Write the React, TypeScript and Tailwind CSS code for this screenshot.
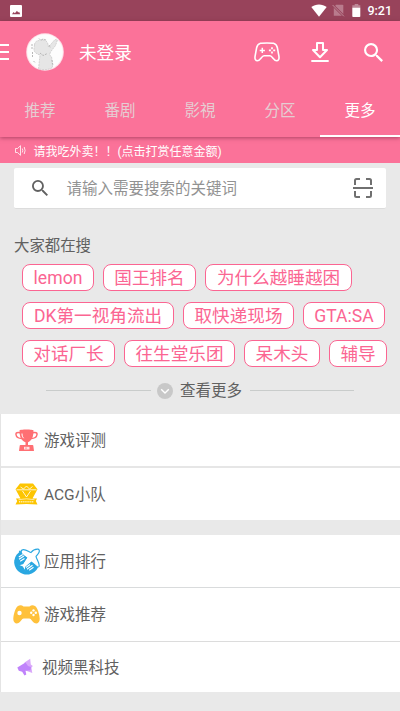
import React from 'react';

const fontStack = "font-['Roboto','Noto_Sans_CJK_SC',sans-serif]";

const tabs = ['推荐', '番剧', '影視', '分区', '更多'];

const tagRows = [
  [
    { label: 'lemon', width: 'w-[72px]' },
    { label: '国王排名', width: 'w-[93px]' },
    { label: '为什么越睡越困', width: 'w-[147px]' },
  ],
  [
    { label: 'DK第一视角流出', width: 'w-[152px]' },
    { label: '取快递现场', width: 'w-[111px]' },
    { label: 'GTA:SA', width: 'w-[82px]' },
  ],
  [
    { label: '对话厂长', width: 'w-[93px]' },
    { label: '往生堂乐团', width: 'w-[111px]' },
    { label: '呆木头', width: 'w-[76px]' },
    { label: '辅导', width: 'w-[58px]' },
  ],
];

function StatusBar() {
  return (
    <div className="flex h-[21px] items-center bg-[#98435b] pl-[10px] pr-[8px] text-white">
      <svg className="h-3 w-3" viewBox="0 0 12 12">
        <rect width="12" height="12" rx="1" fill="#fff" />
        <path d="M2 9.2 3.6 7l1.3 1.3L7 5.8l1.2 1.8.9-.8L10.2 9.2Z" fill="#98435b" />
      </svg>
      <svg className="ml-auto h-[13px] w-4" viewBox="0 0 16 13">
        <path d="M8 12.8.3 3.1C4.700-.4 11.300-.4 15.700 3.100Z" fill="#fff" />
      </svg>
      <svg className="ml-[5px] h-[13px] w-[13px]" viewBox="0 0 13 13">
        <path d="M4 .8h6.500q.8 0 .8.8v10.200H1.800V3.500Z" fill="#b97b8d" />
        <path d="M.8 1.200 12 12.400" stroke="#98435b" strokeWidth="2.400" />
        <path d="M.6 1 11.900 12.300" stroke="#c08a99" strokeWidth="1" />
      </svg>
      <svg className="ml-[7px] h-[13px] w-[9px]" viewBox="0 0 9 13">
        <path d="M2.700 0h3.600v1.300h2V4H.3V1.300h2.400Z" fill="#bd8797" />
        <path d="M.3 3.800h8V12.200q0 .8-.8.8H1.100q-.8 0-.8-.8Z" fill="#fff" />
      </svg>
      <span className="ml-[6px] pt-px text-[12.500px] font-medium leading-none">9:21</span>
    </div>
  );
}

function Avatar() {
  return (
    <svg className="ml-[17px] h-[38px] w-[38px]" viewBox="0 0 38 38">
      <circle cx="19" cy="19" r="18.800" fill="#ffdfe8" />
      <circle cx="19" cy="19" r="17.800" fill="#fdfdfd" />
      <path
        d="M8.500 12C8.500 9 11 7 14.500 7.500c4-1.500 7 .5 7.500 4l.5 2.500L29 6.500l2.500.5-2 5.500-5 6.500-1 3c1.200.5 2 1.500 2.300 3l.7 9.500c-4 2.500-9 2.800-14 1.300L14 22c-4-1-6.500-3.500-6-6.500Z"
        fill="#e6e6e6"
        stroke="#bdbdbd"
        strokeWidth=".6"
        strokeDasharray="2 .8"
      />
      <path
        d="M13 5.500l1.500 1.500L17.500 6l3.500 1.500M14 20l3 2.500 4.500-2M23 12l1.500 3M6 11v5M6.500 19v5M7.500 28l2 2M26 27l1 6"
        fill="none"
        stroke="#b0b0b0"
        strokeWidth=".9"
        strokeDasharray="2 1"
      />
    </svg>
  );
}

function SearchIcon({ className }: { className: string }) {
  return (
    <svg className={className} viewBox="3 3 17.500 17.500">
      <path
        d="M15.500 14h-.79l-.28-.27A6.471 6.471 0 0 0 16 9.500 6.500 6.500 0 1 0 9.500 16c1.610 0 3.090-.59 4.230-1.570l.27.28v.79l5 4.990L20.490 19l-4.990-5zm-6 0C7.010 14 5 11.990 5 9.500S7.010 5 9.500 5 14 7.010 14 9.500 11.990 14 9.500 14z"
        fill="currentColor"
      />
    </svg>
  );
}

function AppBar() {
  return (
    <header className="relative z-10 flex h-[116px] flex-col bg-[#fb7299] shadow-[0_1px_4px_rgba(100,20,50,0.5)]">
      <div className="flex h-[62px] items-center text-white">
        <svg className="h-4 w-[9px]" viewBox="0 0 9 16">
          <path d="M0 1h9M0 8h9M0 15h9" stroke="#fff" strokeWidth="2" />
        </svg>
        <Avatar />
        <span className="ml-[15px] pt-[4px] text-[17.600px] leading-none">未登录</span>
        <svg className="ml-auto h-[20px] w-[26px]" viewBox="0 0 26 20" fill="none" stroke="#fff">
          <path
            d="M6.500 1.300C8.200.8 17.800.8 19.500 1.300c2.200.6 3.300 2 3.900 4.500l1.500 8.400c.5 3.200-.6 4.600-2.300 4.600-2.800 0-4.200-5-6.600-5h-6c-2.400 0-3.800 5-6.600 5-1.700 0-2.800-1.400-2.300-4.600l1.500-8.400c.6-2.500 1.700-3.900 3.900-4.500Z"
            strokeWidth="1.600"
          />
          <path d="M8.300 5.800v5.200M5.700 8.400h5.200" strokeWidth="1.500" />
          <path d="M18 5.300v2M18 9.600v2M14.900 8.400h2M19.200 8.400h2" strokeWidth="1.700" />
        </svg>
        <svg className="ml-[31px] h-[20px] w-[18px]" viewBox="0 0 18 20" fill="none" stroke="#fff">
          <path
            d="M6 1h6v7h4L9 15.200 2 8h4Z"
            strokeWidth="2"
            strokeLinejoin="round"
          />
          <path d="M.3 19h17.400" strokeWidth="2" />
        </svg>
        <SearchIcon className="ml-[35px] mr-[17px] h-[19px] w-[19px]" />
      </div>
      <nav className="grid flex-1 grid-cols-5">
        {tabs.map((tab, index) => (
          <div
            key={tab}
            className={
              index === 4
                ? 'flex items-center justify-center border-b-2 border-white pt-[5px] text-[15.500px] text-white'
                : 'flex items-center justify-center border-b-2 border-transparent pt-[5px] text-[15.500px] text-[#e5cdd2]'
            }
          >
            {tab}
          </div>
        ))}
      </nav>
    </header>
  );
}

function SearchPanel() {
  return (
    <>
      <div className="mx-[14px] mt-[5px] flex h-[41px] items-center rounded-[2px] border-b border-[#dcdcdc] bg-white">
        <SearchIcon className="ml-[18px] h-4 w-4 text-[#616161]" />
        <span className="ml-[18.500px] pt-[3px] text-[15.500px] text-[#929292]">请输入需要搜索的关键词</span>
        <svg
          className="ml-auto mr-[13px] h-[20px] w-5"
          viewBox="0 0 20 20"
          fill="none"
          stroke="#707070"
          strokeWidth="2"
        >
          <path d="M2 7V2.500Q2 1 3.500 1H7M13 1h3.500Q18 1 18 2.500V7M2 13v4.500Q2 19 3.500 19H7M13 19h3.500q1.500 0 1.500-1.500V13M0 10h20" />
        </svg>
      </div>
      <h2 className="ml-[14px] mt-[26px] text-[15.400px] leading-[22px] text-[#616161]">大家都在搜</h2>
      <div className="ml-[22px] mt-[7px] flex flex-col gap-[11px]">
        {tagRows.map((row, index) => (
          <div key={index} className="flex gap-[9px]">
            {row.map((tag) => (
              <div
                key={tag.label}
                className={`${tag.width} flex h-[27px] shrink-0 items-center justify-center whitespace-nowrap rounded-[8px] border border-[#fb6592] bg-white pt-[3px] text-[17.600px] leading-none text-[#fb6592]`}
              >
                {tag.label}
              </div>
            ))}
          </div>
        ))}
      </div>
      <div className="mx-[46px] mt-[12px] flex h-[23px] items-center">
        <div className="h-px w-[105px] bg-[#c9cccb]" />
        <svg className="ml-[6px] h-4 w-4" viewBox="0 0 16 16">
          <circle cx="8" cy="8" r="8" fill="#c8c8c8" />
          <path d="m4.200 6.300 3.800 3.700 3.800-3.700" fill="none" stroke="#fff" strokeWidth="1.400" />
        </svg>
        <span className="ml-[7px] pt-[3px] text-[15.500px] leading-none text-[#616161]">查看更多</span>
        <div className="ml-auto h-px w-[104px] bg-[#c9cccb]" />
      </div>
    </>
  );
}

function TrophyIcon() {
  return (
    <svg className="h-[22px] w-[23px]" viewBox="0 0 23 22">
      <path
        d="M5.500 3.800C2 3 .7 4 1 5.500c.3 2.500 2.500 4 6 4M17.500 3.800c3.500-.8 4.800.2 4.500 1.700-.3 2.500-2.500 4-6 4"
        fill="none"
        stroke="#ff6f73"
        strokeWidth="1.500"
      />
      <path
        d="M4.500 1.500C4.500.2 18.500.2 18.500 1.500c0 6-1.500 10-5.500 11.800V16h4.500q.8 0 .8.8L19 22H4l.7-5.200q0-.8.8-.8h5v-2.700C6 11.500 4.500 7.500 4.500 1.500Z"
        fill="#ff6f73"
      />
      <path d="M7 4.500c0 2.500.6 3.500 1.600 4.700" fill="none" stroke="#fff" strokeWidth="1" />
      <path d="M9 17.800H14.500v2.700H9Z" fill="#ffe3e4" />
      <path d="M11 18.300v1.700" stroke="#ff6f73" strokeWidth=".8" />
    </svg>
  );
}

function DiamondIcon() {
  return (
    <svg className="h-[22px] w-[23px]" viewBox="0 0 23 22">
      <path
        d="M5 .5h13l4.500 5.700L17.500 15.500H22l-1.200 2.500L22.500 21.500q-11-1.200-22 0L2.200 18 1 15.500H5.500L.5 6.200Z"
        fill="#fdc500"
      />
      <path d="M1.500 6.800h20M5.500 4l3 2 3-3L14.500 6 17.500 3.500M7.500 8l4 6 4-6" fill="none" stroke="#fff" strokeWidth=".8" />
      <path d="M3.500 16.700q8-1.800 16 0" fill="none" stroke="#fff" strokeWidth=".6" />
      <path d="M4 18.800h15" stroke="#fff0b5" strokeWidth="1.500" strokeDasharray="1.300 .8" />
    </svg>
  );
}

function PlaneIcon() {
  return (
    <svg className="h-[27px] w-[27px]" viewBox="0 0 27 27">
      <path d="M8 3A12.500 12.500 0 1 0 25 19.500L17 10Z" fill="#29a7e1" />
      <path
        d="M9 2c2.500-1.500 6 1.200 9 2.500 1.500-2 4-3.500 7-3.300 1.500.3 1.600 2 .8 3.600-.7 1.500-2 2.500-2.800 3.700.7 3.500 4.200 7 3 10-1.500 2-4.500-2.500-7.500-4.300L12.800 19 12 23.500 9.500 19l-4.500-2 4.500-1.300 4-6C10 8 6.500 4.500 9 2Z"
        fill="#fff"
        stroke="#29a7e1"
        strokeWidth="1.200"
      />
      <path d="M6.500 2.800C7.500 6 10 8 13 9.700L9.500 15.500" fill="none" stroke="#29a7e1" strokeWidth="1.500" />
      <path
        d="m5.800 9 4-2.500M6 11.200l5-3.200M7.200 13.200l4.300-2.700M13 19.500l4-3M14 21.300l5.500-4M16.200 22.300l4.300-3"
        stroke="#fff"
        strokeWidth="1.100"
      />
    </svg>
  );
}

function GamepadIcon() {
  return (
    <svg className="h-[19px] w-[27px]" viewBox="0 0 27 19">
      <path
        d="M5 1c2-1.200 4-.8 5.500.5h6C18 .2 20 -.2 22 1c2.500 1.500 4.500 8.500 4.700 12.500.2 4-2.700 5.800-5.200 4.500-2-1-3.300-4.500-5.200-4.500h-5.600C8.800 13.500 7.500 17 5.500 18 3 19.300.1 17.500.3 13.500.500 9.500 2.500 2.500 5 1Z"
        fill="#ffc13b"
      />
      <circle cx="6.500" cy="8" r="2.200" fill="#fff" />
      <circle cx="20.500" cy="5.400" r="1.200" fill="#fff" />
      <circle cx="20.500" cy="10" r="1.200" fill="#fff" />
      <circle cx="18.200" cy="7.700" r="1.200" fill="#fff" />
      <circle cx="22.800" cy="7.700" r="1.200" fill="#fff" />
    </svg>
  );
}

function MegaphoneIcon() {
  return (
    <svg className="h-[18px] w-[16px]" viewBox="0 0 16 18">
      <path d="M7.500 4.500 13.200.8l.6 5.700 2 1.500-1.400 1.800.9 5.200-6.800-2.500Z" fill="#daa9fa" />
      <path d="M.3 9.500 8.500 4.500 11 8l3 1-.5 3.200-5 .6.8 3.700-1.800 1-2.300-3.700-3.400-1Z" fill="#c083fb" />
    </svg>
  );
}

export default function App() {
  return (
    <div className={`h-[711px] w-[400px] overflow-hidden bg-[#e9e9e9] ${fontStack}`}>
      <StatusBar />
      <AppBar />

      {/* Notice */}
      <div className="flex h-[26px] items-center bg-[#fb7299] text-white">
        <svg className="ml-[15px] h-[11px] w-[11px]" viewBox="0 0 11 11" fill="none" stroke="#fff" strokeWidth=".8">
          <path d="M.5 3.500h2L5.500.7v9.600L2.500 7.500h-2ZM7.300 3.500q1 2 0 4M9.200 2q1.800 3.500 0 7" />
        </svg>
        <span className="ml-[7.500px] pt-[3px] text-[12px] leading-none">请我吃外卖！！(点击打赏任意金额)</span>
      </div>

      <SearchPanel />

      {/* Menu groups */}
      <div className="mt-[12px] flex flex-col border-l border-[#e4e4e4] text-[15.500px] text-[#616161]">
        <div className="flex h-[54px] items-center border-b-2 border-[#e6e6e6] bg-white pl-[14px]">
          <TrophyIcon />
          <span className="ml-[6px] pt-[3px]">游戏评测</span>
        </div>
        <div className="flex h-[52px] items-center bg-white pl-[14px]">
          <DiamondIcon />
          <span className="ml-[6px] pt-[3px]">ACG小队</span>
        </div>
        <div className="mt-[15px] flex h-[53px] items-center border-b border-[#d9dbdc] bg-white pl-[12px]">
          <PlaneIcon />
          <span className="ml-[4px] pt-[3px]">应用排行</span>
        </div>
        <div className="flex h-[54px] items-center border-b border-[#dcdcdc] bg-white pl-[12px]">
          <GamepadIcon />
          <span className="ml-[4px] pt-[3px]">游戏推荐</span>
        </div>
        <div className="flex h-[50px] items-center bg-white pl-[16px]">
          <MegaphoneIcon />
          <span className="ml-[9px] pt-[3px]">视频黑科技</span>
        </div>
      </div>
    </div>
  );
}
